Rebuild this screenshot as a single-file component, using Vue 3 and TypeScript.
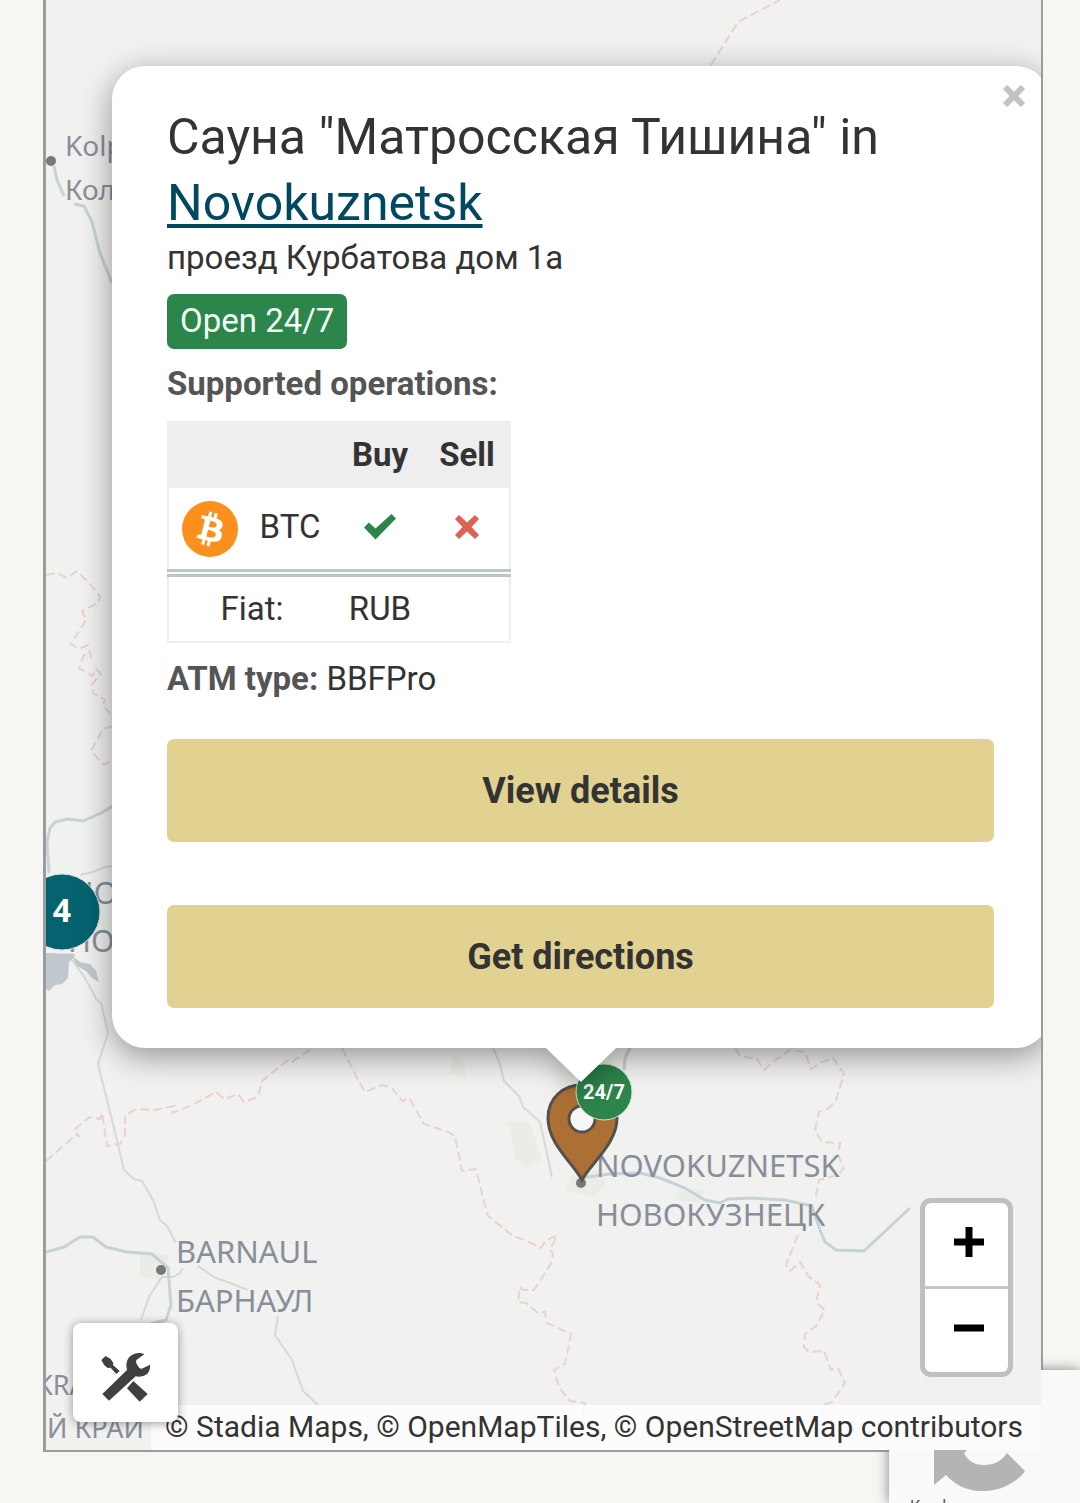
<script setup lang="ts">
interface MapLabel {
  text: string
  x: number
  y: number
  size: number
}

interface Operation {
  coin: string
  buy: boolean
  sell: boolean
}

const labels: MapLabel[] = [
  { text: 'Kolpashevo', x: 65, y: 156, size: 28 },
  { text: 'Колпашево', x: 65, y: 200, size: 28 },
  { text: 'NOVOSIBIRSK', x: 70, y: 904, size: 31 },
  { text: 'НОВОСИБИРСК', x: 68, y: 952, size: 31 },
  { text: 'NOVOKUZNETSK', x: 596, y: 1177, size: 31 },
  { text: 'НОВОКУЗНЕЦК', x: 596, y: 1226, size: 31 },
  { text: 'BARNAUL', x: 176, y: 1263, size: 31 },
  { text: 'БАРНАУЛ', x: 176, y: 1312, size: 31 },
  { text: 'KRAI', x: 36, y: 1395, size: 27 },
  { text: 'Й КРАЙ', x: 47, y: 1438, size: 27 },
]

const borders: string[] = [
  '711,65 738,22 780,0',
  '46,575 57,573 67,578 77,571 89,583 100,596 98,603 82,611 86,620 71,644 79,649 88,645 91,657 84,655 79,668 92,676 96,669 101,674 92,684 93,693 105,700 103,705 113,717',
  '113,726 103,729 91,751 104,765 113,759',
  '46,1161 77,1134 79,1137 76,1128 90,1117 100,1119 102,1113 107,1146 120,1144 125,1135 125,1115 137,1109 155,1110 174,1106 172,1113 190,1106 216,1092 224,1099 238,1094 244,1102 258,1097 262,1081 288,1060 292,1062 311,1049',
  '342,1048 354,1072 365,1092 382,1085 392,1088 402,1101 409,1098 424,1124 448,1132 455,1136 462,1171 476,1169 484,1202 488,1216 513,1236 525,1240 541,1248 546,1240 557,1236 550,1250 553,1253 552,1262 534,1290 523,1290 520,1287 518,1302 526,1303 538,1313 545,1312 547,1323 571,1334 565,1364 554,1370 559,1387 570,1401 585,1403 582,1420',
  '735,1048 740,1056 757,1059 764,1070 774,1061 790,1050 805,1052 811,1069 820,1063 833,1058 844,1074 836,1100 829,1108 819,1112 815,1130 822,1142 840,1143 838,1155 844,1168 838,1175 819,1180 815,1200',
  '798,1235 792,1250 786,1266 790,1271 800,1262 808,1276 820,1285 816,1302 825,1310 816,1326 805,1334 804,1347 809,1352 824,1351 831,1370 838,1368 845,1383 832,1402 823,1405 815,1445',
]

const rivers: string[] = [
  '54,166 57,180 64,196',
  '74,204 84,206 92,222 100,253 112,283',
  '113,806 101,813 83,821 68,819 55,822 50,828 47,842 49,873',
  '46,1252 64,1247 80,1237 93,1237 106,1247 127,1252 152,1254 168,1268 171,1305 166,1320 150,1324',
  '630,1048 625,1058 624,1070',
  '580,1178 610,1174 640,1173 660,1178 685,1188 705,1200 720,1203 728,1199 750,1198 785,1200 812,1206 820,1230 825,1242 836,1250 864,1251 910,1208',
]

const roads: string[] = [
  '80,875 93,872 105,867 113,866',
  '72,960 85,978 97,1000 101,1003 108,1033 98,1064 112,1120 124,1170 134,1179 142,1181 153,1200 160,1220 167,1226 176,1243',
  '183,1268 180,1273 173,1277 162,1277 150,1295 141,1320',
  '198,1266 214,1277 230,1283 248,1290',
  '278,1316 275,1335 292,1360 303,1391 318,1405',
  '493,1048 500,1064 504,1081 519,1096 523,1107 540,1122 544,1140 552,1177',
]

const woods: string[] = [
  '508,1122 530,1123 542,1160 525,1168 515,1158',
  '452,1055 463,1060 467,1077 450,1074',
  '680,1188 706,1190 698,1203 675,1200',
  '570,1176 600,1170 606,1185 592,1197 566,1190',
  '140,1252 170,1255 160,1280 140,1277',
]

const lakes: string[] = [
  '46,953 75,954 74,958 69,962 68,978 62,984 55,985 49,991 46,989',
  '72,956 80,962 90,964 96,971 99,982 92,978 86,971 77,966',
]

const operations: Operation[] = [{ coin: 'BTC', buy: true, sell: false }]
</script>

<template>
  <div class="page">
    <main class="frame">
      <div class="map">
        <svg class="tiles" width="100%" height="100%" aria-hidden="true">
          <g transform="translate(-46 0)">
            <polygon v-for="p in woods" :key="p" class="wood" :points="p" />
            <polygon v-for="p in lakes" :key="p" class="lake" :points="p" />
            <polyline v-for="p in roads" :key="p" class="road" :points="p" />
            <polyline v-for="p in borders" :key="p" class="border" :points="p" />
            <polyline v-for="p in rivers" :key="p" class="river" :points="p" />
            <circle class="town" cx="51" cy="161" r="5" />
            <circle class="town" cx="161" cy="1270" r="5" />
            <circle class="town" cx="581" cy="1183" r="5" />
            <text
              v-for="l in labels"
              :key="l.text"
              class="label"
              :x="l.x"
              :y="l.y"
              :font-size="l.size"
            >{{ l.text }}</text>
            <circle class="cluster" cx="62" cy="912" r="38" />
            <text class="cluster-count" x="62" y="922">4</text>
            <path
              class="pin"
              d="M582 1180 C573 1163 548 1144 548 1118 C548 1098 563 1085 582 1085 C602 1085 617 1098 617 1118 C617 1144 591 1163 582 1180 Z"
            />
            <circle class="pin-hole" cx="582" cy="1119" r="13" />
            <circle class="always" cx="604" cy="1092" r="28" />
            <text class="always-text" x="604" y="1099">24/7</text>
          </g>
        </svg>

        <section class="popup">
          <button class="close" type="button" aria-label="Close">
            <svg width="22" height="22" viewBox="0 0 22 22">
              <path d="M2 2 20 20 M20 2 2 20" stroke="#c3c3c3" stroke-width="6" />
            </svg>
          </button>
          <h2 class="title">Сауна "Матросская Тишина" in <a href="#novokuznetsk">Novokuznetsk</a></h2>
          <p class="line">проезд Курбатова дом 1а</p>
          <span class="badge">Open 24/7</span>
          <p class="line strong">Supported operations:</p>
          <table class="ops">
            <colgroup>
              <col class="c-icon" />
              <col class="c-coin" />
              <col class="c-buy" />
              <col class="c-sell" />
            </colgroup>
            <thead>
              <tr>
                <td colspan="2"></td>
                <th scope="col">Buy</th>
                <th scope="col">Sell</th>
              </tr>
            </thead>
            <tbody>
              <tr v-for="op in operations" :key="op.coin" class="coin-row">
                <td>
                  <svg class="coin" width="56" height="56" viewBox="0 0 32 32">
                    <circle cx="16" cy="16" r="16" fill="#fb911c" />
                    <path
                      fill="#fff"
                      d="M23.189 14.02c.314-2.096-1.283-3.223-3.465-3.975l.708-2.84-1.728-.43-.69 2.765c-.454-.114-.92-.22-1.385-.326l.695-2.783L15.596 6l-.708 2.839c-.376-.086-.746-.17-1.104-.26l.002-.009-2.384-.595-.46 1.846s1.283.294 1.256.312c.7.175.826.638.805 1.006l-.806 3.235c.048.012.11.03.18.057l-.183-.045-1.13 4.532c-.086.212-.303.531-.793.41.018.025-1.256-.313-1.256-.313l-.858 1.978 2.25.561c.418.105.828.215 1.231.318l-.715 2.872 1.727.43.708-2.84c.472.127.93.245 1.378.357l-.706 2.828 1.728.43.715-2.866c2.948.558 5.164.333 6.097-2.333.752-2.146-.037-3.385-1.588-4.192 1.13-.26 1.98-1.003 2.207-2.538zm-3.95 5.538c-.533 2.147-4.148.986-5.32.695l.95-3.805c1.172.293 4.929.872 4.37 3.11zm.535-5.569c-.487 1.953-3.495.96-4.47.717l.86-3.45c.975.243 4.118.696 3.61 2.733z"
                    />
                  </svg>
                </td>
                <td class="coin-name">{{ op.coin }}</td>
                <td v-for="(ok, i) in [op.buy, op.sell]" :key="i" class="support">
                  <svg v-if="ok" class="mark" width="32" height="26" viewBox="0 0 32 26" role="img" aria-label="Yes">
                    <path fill="#2c854b" d="M0 13.500 4.800 8.500 11.500 14.500 27.500 0 32 4.500 11.500 25.500Z" />
                  </svg>
                  <svg v-else class="mark" width="26" height="26" viewBox="0 0 26 26" role="img" aria-label="No">
                    <path fill="#de6253" d="M5 1 13 8.600 21 1 25 5 17.400 13 25 21 21 25 13 17.400 5 25 1 21 8.600 13 1 5Z" />
                  </svg>
                </td>
              </tr>
              <tr class="fiat-row">
                <td colspan="2">Fiat:</td>
                <td>RUB</td>
                <td></td>
              </tr>
            </tbody>
          </table>
          <p class="line"><b class="strong">ATM type:</b> BBFPro</p>
          <div class="actions">
            <a class="action" href="#details">View details</a>
            <a class="action" href="#directions">Get directions</a>
          </div>
          <svg class="tip" width="70" height="34" viewBox="0 0 70 34">
            <path d="M0 0H70L35 34Z" fill="#fff" />
          </svg>
        </section>

        <div class="zoom">
          <button type="button" aria-label="Zoom in">
            <svg width="30" height="30" viewBox="0 0 30 30"><path d="M0 15H30M15 0V30" stroke="#000" stroke-width="7" /></svg>
          </button>
          <button type="button" aria-label="Zoom out">
            <svg width="30" height="30" viewBox="0 0 30 30"><path d="M0 15H30" stroke="#000" stroke-width="7" /></svg>
          </button>
        </div>

        <p class="credits">© Stadia Maps, © OpenMapTiles, © OpenStreetMap contributors</p>

        <button class="tools" type="button" aria-label="Map settings">
          <svg width="50" height="50" viewBox="212 934 150 150" fill="#404040">
            <path d="M216 1060 290 988C284 962 294 945 313 939C324 935 336 937 342 941L318 958Q316 964 319 970L327 982Q333 986 339 982L359 972C361 984 356 998 344 1004C334 1009 325 1009 316 1007L236 1080Z" />
            <path d="M213 958 226 946 241 955 249 967 248 973 268 991 258 1000 241 981 232 982 222 974Z" />
            <path d="M309 1021 352 1060 328 1083 290 1043Z" />
          </svg>
        </button>
      </div>
    </main>

    <aside class="captcha">
      <svg class="captcha-logo" width="92" height="74" viewBox="0 0 92 74">
        <path fill="#b4b4b4" d="M0 24V68L12 58C24 71 38 75 52 74C70 73 84 64 91 54L73 36C68 44 60 48 50 48C40 48 34 44 30 36L42 24Z" />
      </svg>
      <span class="captcha-text">Конфиденциальность</span>
    </aside>
  </div>
</template>

<style>
body {
  margin: 0;
  background: #f6f7f2;
}
</style>

<style scoped>
.page {
  position: relative;
  box-sizing: border-box;
  min-height: 100vh;
  padding: 0 37px 51px 43px;
  overflow: hidden;
  background: #f6f7f2;
  color: #333;
  font-family: Roboto, "Liberation Sans", sans-serif;
  font-size: 33px;
  line-height: 46px;
}

.frame {
  border: solid #9b9d9c;
  border-width: 0 2px 2px 3px;
}

.map {
  position: relative;
  z-index: 2;
  display: flow-root;
  min-height: calc(100vh - 53px);
  overflow: hidden;
  background: #f1f1ef;
}

.tiles {
  position: absolute;
  inset: 0;
}

.tiles polyline {
  fill: none;
  stroke-width: 2;
}

.wood { fill: #ebece6; }
.lake { fill: #bfc8cd; }
.road { stroke: #d8d9d7; }
.tiles .river { stroke: #c6d3d6; stroke-width: 3; }
.border { stroke: #e8d2d3; stroke-dasharray: 9 4; }
.town { fill: #777975; }

.label {
  fill: #868f9a;
  font-family: "Noto Sans", "Open Sans", sans-serif;
}

.cluster {
  fill: #04636f;
  stroke: #d3e5e6;
  stroke-width: 1;
}

.cluster-count {
  fill: #fff;
  font: 700 32px "Open Sans", sans-serif;
  text-anchor: middle;
}

.pin {
  fill: #ac7034;
  stroke: #56504b;
  stroke-width: 3;
}

.pin-hole {
  fill: #f6f6f6;
  stroke: #56504b;
  stroke-width: 3;
}

.always {
  fill: #2c854b;
  stroke: #cfe3d3;
  stroke-width: 1;
}

.always-text {
  fill: #fff;
  font: 700 20px Roboto, sans-serif;
  text-anchor: middle;
}

.popup {
  position: relative;
  margin: 66px -8px 0 66px;
  padding: 38px 55px 40px;
  border-radius: 33px;
  background: #fff;
  box-shadow: 0 8px 32px rgba(0, 0, 0, 0.4);
}

.tip {
  position: absolute;
  top: 100%;
  left: calc(50% - 35px);
  filter: drop-shadow(0 8px 12px rgba(0, 0, 0, 0.3));
  clip-path: inset(0 -40px -40px -40px);
}

.close {
  position: absolute;
  top: 19px;
  right: 24px;
  display: flex;
  padding: 0;
  border: 0;
  background: none;
}

.title {
  margin: 0 0 -1px;
  font-size: 50px;
  font-weight: 400;
  line-height: 66px;
}

.title a {
  color: #00485f;
  text-decoration-thickness: 4px;
  text-underline-offset: 4px;
}

.line {
  margin: 0;
}

.strong {
  color: #555;
  font-weight: 700;
}

.badge {
  display: block;
  width: fit-content;
  margin: 13px 0 12px;
  padding: 4px 13px 5px;
  border-radius: 7px;
  background: #2c854b;
  color: #f1fff4;
}

.ops {
  width: 344px;
  margin: 14px 0 13px;
  border-collapse: collapse;
  table-layout: fixed;
  border: 2px solid #eee;
  text-align: center;
}

.ops td {
  padding: 0;
}

.ops th {
  padding: 0 0 2px;
}

.ops thead tr {
  height: 66px;
  background: #eee;
}

.c-icon { width: 82px; }
.c-coin { width: 85px; }
.c-buy { width: 90px; }
.c-sell { width: 85px; }

.coin-row { height: 85px; }
.coin-row .coin { display: block; margin: 0 auto 0 13px; }
.ops .coin-name { padding: 0 5px 4px 0; }
.ops .support { padding-bottom: 4px; }
.mark { display: block; margin: auto; }

.fiat-row {
  height: 69px;
  border-top: 8px double #bcc5ca;
}

.actions {
  display: flex;
  flex-direction: column;
  gap: 63px;
  margin-top: 37px;
}

.action {
  padding: 28px 16px 27px;
  border-radius: 7px;
  background: #e2d291;
  color: #333;
  font-size: 36px;
  font-weight: 700;
  line-height: 48px;
  text-align: center;
  text-decoration: none;
}

.zoom {
  position: absolute;
  right: 28px;
  bottom: 73px;
  display: flex;
  flex-direction: column;
  gap: 3px;
  overflow: hidden;
  border: 5px solid #bfbfbf;
  border-radius: 11px;
  background: #c6c6c6;
}

.zoom button {
  display: flex;
  align-items: center;
  justify-content: center;
  width: 83px;
  height: 83px;
  padding: 0 0 6px 5px;
  border: 0;
  background: #fff;
}

.zoom button:first-child { border-radius: 5px 5px 0 0; }
.zoom button:last-child { border-radius: 0 0 5px 5px; }

.credits {
  position: absolute;
  right: 0;
  bottom: 0;
  margin: 0;
  padding: 0 18px 1px 14px;
  background: rgba(255, 255, 255, 0.8);
  font-size: 30px;
  line-height: 44px;
  white-space: nowrap;
}

.tools {
  position: absolute;
  bottom: 28px;
  left: 27px;
  display: flex;
  align-items: center;
  justify-content: center;
  width: 105px;
  height: 99px;
  padding: 8px 0 0;
  border: 0;
  border-radius: 8px;
  background: #fff;
  box-shadow: 0 1px 10px rgba(0, 0, 0, 0.4);
}

.captcha {
  position: absolute;
  right: 0;
  bottom: 0;
  z-index: 1;
  width: 191px;
  height: 133px;
  overflow: hidden;
  background: #f9f9f9;
  box-shadow: 0 0 12px #808080;
}

.captcha-logo {
  display: block;
  margin: 47px 0 0 45px;
}

.captcha-text {
  display: block;
  margin: 6px 0 0 21px;
  color: #555;
  font-size: 16px;
  line-height: 20px;
}
</style>
